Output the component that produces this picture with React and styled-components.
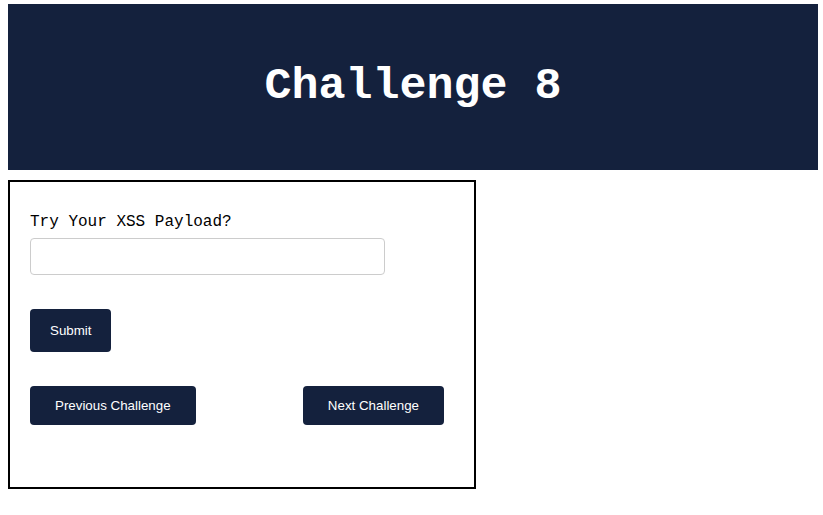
import React from "react";
import styled, { createGlobalStyle } from "styled-components";

const GlobalStyle = createGlobalStyle`
  body {
    margin: 4px 5px 8px 8px;
    background: #fff;
    font-family: "Liberation Mono", monospace;
  }
`;

const Header = styled.header`
  background: #14213d;
  height: 166px;
  display: flex;
  align-items: center;
  justify-content: center;
`;

const Title = styled.h1`
  margin: 0 0 2px;
  color: #fff;
  font-family: "Liberation Mono", monospace;
  font-weight: bold;
  font-size: 45px;
`;

const Card = styled.div`
  margin-top: 10px;
  width: 468px;
  height: 309px;
  border: 2px solid #000;
  padding: 31px 20px 0;
  box-sizing: border-box;
  display: flex;
  flex-direction: column;
  align-items: flex-start;
`;

const Label = styled.label`
  font-size: 16px;
  line-height: 18px;
  color: #000;
  margin-bottom: 7px;
`;

const Input = styled.input`
  width: 355px;
  height: 37px;
  box-sizing: border-box;
  border: 1px solid #ccc;
  border-radius: 4px;
  padding: 0 8px;
  margin: 0 0 34px;
`;

const Button = styled.button`
  background: #14213d;
  color: #fff;
  border: none;
  border-radius: 4px;
  font-family: "Liberation Sans", Arial, sans-serif;
  font-size: 13.33px;
  line-height: 15px;
  padding: ${(p) => (p.$big ? "14px 20px" : "12px 25px")};
  cursor: pointer;
`;

const NavRow = styled.div`
  margin-top: 34px;
  width: 414px;
  display: flex;
  justify-content: space-between;
`;

export default function App() {
  return (
    <>
      <GlobalStyle />
      <Header>
        <Title>Challenge 8</Title>
      </Header>
      <Card>
        <Label htmlFor="payload">Try Your XSS Payload?</Label>
        <Input id="payload" type="text" />
        <Button $big>Submit</Button>
        <NavRow>
          <Button>Previous Challenge</Button>
          <Button>Next Challenge</Button>
        </NavRow>
      </Card>
    </>
  );
}
